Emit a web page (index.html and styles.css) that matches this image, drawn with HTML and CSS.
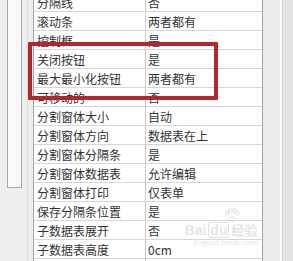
FILE: index.html
```html
<!DOCTYPE html>
<html lang="zh">
<head>
<meta charset="utf-8">
<link rel="stylesheet" href="styles.css">
</head>
<body>
<div class="screen">
  <div class="strip"></div>
  <div class="nav-box"></div>
  <div class="gutter"><div class="gutter-line"></div></div>
  <div class="sheet">
    <div class="row"><div class="key">分隔线</div><div class="val">否</div></div>
    <div class="row"><div class="key">滚动条</div><div class="val">两者都有</div></div>
    <div class="row"><div class="key">控制框</div><div class="val">是</div></div>
    <div class="row"><div class="key">关闭按钮</div><div class="val">是</div></div>
    <div class="row"><div class="key">最大最小化按钮</div><div class="val">两者都有</div></div>
    <div class="row"><div class="key">可移动的</div><div class="val">否</div></div>
    <div class="row"><div class="key">分割窗体大小</div><div class="val">自动</div></div>
    <div class="row"><div class="key">分割窗体方向</div><div class="val">数据表在上</div></div>
    <div class="row"><div class="key">分割窗体分隔条</div><div class="val">是</div></div>
    <div class="row"><div class="key">分割窗体数据表</div><div class="val">允许编辑</div></div>
    <div class="row"><div class="key">分割窗体打印</div><div class="val">仅表单</div></div>
    <div class="row"><div class="key">保存分隔条位置</div><div class="val">是</div></div>
    <div class="row"><div class="key">子数据表展开</div><div class="val">否</div></div>
    <div class="row"><div class="key">子数据表高度</div><div class="val">0cm</div></div>
    <div class="row"><div class="key"></div><div class="val"></div></div>
  </div>
  <div class="scroll">
    <div class="scroll-track"></div>
    <div class="scroll-hi"></div>
    <div class="scroll-edge"></div>
  </div>
  <div class="highlight"></div>
  <div class="watermark">
    <svg class="paw" width="18" height="14" viewBox="0 0 18 14">
      <g fill="none" stroke="#dcdcdc" stroke-width="1">
        <ellipse cx="4" cy="5" rx="1.6" ry="2"/>
        <ellipse cx="7.5" cy="2.5" rx="1.6" ry="2"/>
        <ellipse cx="11" cy="2.5" rx="1.6" ry="2"/>
        <ellipse cx="14.5" cy="5" rx="1.6" ry="2"/>
        <path d="M5 12 C6 8 12 8 13.5 12 C12 13.5 6.5 13.5 5 12 Z"/>
      </g>
    </svg>
    <div class="wm-line">
      <span class="wm-bai">Bai</span><span class="wm-du">du</span><span class="wm-jy">经验</span>
    </div>
    <div class="wm-url">jingyan.baidu.com</div>
  </div>
</div>
</body>
</html>
```
FILE: styles.css
```css
html, body {
  margin: 0;
  padding: 0;
  background: #efefef;
}
.screen {
  position: relative;
  width: 293px;
  height: 261px;
  overflow: hidden;
  display: flex;
  align-items: flex-start;
  background: #efefef;
  font-family: "Noto Sans CJK SC", "Noto Sans", sans-serif;
}
.strip {
  width: 7px;
  height: 261px;
  background: #eeeeee;
}
.nav-box {
  width: 15px;
  height: 190px;
  margin-top: -2px;
  box-sizing: border-box;
  background: #f9f9f9;
  border: 1px solid #a8a8a8;
}
.gutter {
  width: 11px;
  height: 261px;
  display: flex;
  padding-left: 5px;
  box-sizing: border-box;
  background: #efefef;
}
.gutter-line {
  width: 1px;
  height: 100%;
  background: #dedede;
}
.sheet {
  width: 230px;
  margin-top: -7px;
  box-sizing: border-box;
  background: #ffffff;
  border-left: 1px solid #a4a4a4;
  border-right: 1px solid #a4a4a4;
}
.row {
  display: grid;
  grid-template-columns: 112px 1fr;
  height: 19px;
  box-sizing: border-box;
  border-bottom: 1px solid #d6d6d6;
  font-size: 12px;
  line-height: 18px;
  color: #333333;
}
.key {
  padding-left: 3px;
  padding-top: 1px;
  border-right: 1px solid #c9c9c9;
  white-space: nowrap;
}
.val {
  padding-left: 2px;
  padding-top: 1px;
  white-space: nowrap;
}
.scroll {
  flex: 1;
  height: 261px;
  display: flex;
}
.scroll-track {
  width: 17px;
  background: #ececec;
}
.scroll-hi {
  width: 2px;
  background: #f9f9f9;
}
.scroll-edge {
  flex: 1;
  background: #e3e3e3;
  border-left: 1px solid #d4d4d4;
}
.highlight {
  position: absolute;
  left: 28px;
  top: 42px;
  width: 190px;
  height: 58px;
  box-sizing: border-box;
  border: 4px solid #b3262c;
  border-radius: 1px;
}
.watermark {
  position: absolute;
  left: 176px;
  top: 208px;
  width: 90px;
  display: flex;
  flex-direction: column;
  align-items: center;
  color: #e2e2e2;
  pointer-events: none;
}
.paw {
  margin-left: 22px;
}
.wm-line {
  display: flex;
  align-items: center;
  gap: 2px;
  height: 15px;
  font-family: "Liberation Sans", sans-serif;
  font-weight: bold;
  font-size: 14px;
  line-height: 14px;
}
.wm-bai {
  color: #e6e6e6;
}
.wm-du {
  border: 1px solid #e0e0e0;
  border-radius: 3px;
  padding: 0 1px;
  color: #e6e6e6;
}
.wm-jy {
  font-family: "Noto Sans CJK SC", sans-serif;
  font-size: 13px;
  color: #e4e4e4;
}
.wm-url {
  font-family: "Liberation Sans", sans-serif;
  font-size: 8px;
  line-height: 10px;
  margin-top: 1px;
  margin-left: 10px;
  color: #e6e6e6;
}
```
